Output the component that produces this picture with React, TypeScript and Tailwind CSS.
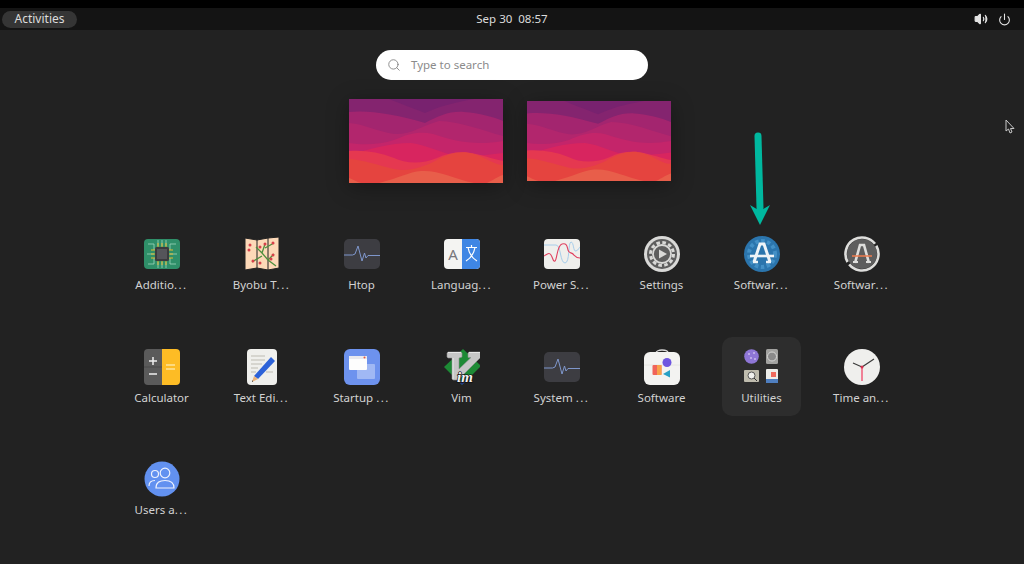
import { ReactNode } from 'react';
import { Search, Power, Volume2 } from 'lucide-react';

// Waves of the Ubuntu wallpaper, back to front
function Wallpaper({ className }: { className: string }) {
  return (
    <svg viewBox="0 0 154 84" preserveAspectRatio="none" className={className}>
      <rect width="154" height="84" fill="#78226f" />
      <path d="M0 0H40C50 4 60 8 76 14C95 5 115 2 125 0H154V30H0Z" fill="#84246f" />
      <path d="M0 13C20 11 45 15 76 24C90 17 100 12 115 13S145 18 154 22V84H0Z" fill="#a3256f" />
      <path d="M0 24C15 25 30 33 45 35C62 36 72 27 90 22C110 22 135 32 154 37V84H0Z" fill="#b2266d" />
      <path d="M0 44C14 46 30 46 45 41C60 34 72 32 84 35C105 42 125 47 154 42V84H0Z" fill="#c4256a" />
      <path d="M0 56C22 50 40 44 62 44C78 46 92 54 104 56S140 56 154 54V84H0Z" fill="#d8255f" />
      <path d="M0 52C15 51 30 53 45 59C55 64 72 66 88 59C100 53 115 52 127 55S145 60 154 62V84H0Z" fill="#e53850" />
      <path d="M0 60C15 61 28 66 45 70C60 73 75 68 88 61C100 54 112 51 125 55S145 66 154 66V84H0Z" fill="#e5443f" />
      <path d="M30 84C50 79 60 73 72 72C90 71 105 80 125 84Z" fill="#e85e4a" />
      <path d="M0 79C3 80 8 83 12 84H0ZM138 84C144 81 150 77 154 76V84Z" fill="#e85e4a" />
    </svg>
  );
}

function Pulse({ y = 0 }: { y?: number }) {
  return (
    <g transform={`translate(0 ${y})`}>
      <rect x="0" y="0" width="36" height="30" rx="5" fill="#3d3d42" />
      <path d="M0 16H8.500L11 15L14 7L18 22L20.500 14L22 19L24 16.500H36" fill="none" stroke="#7f97cc" strokeWidth="1" />
    </g>
  );
}

const icons: Record<string, ReactNode> = {
  chip: (
    <>
      <rect y="3" width="36" height="30" rx="4" fill="#2f8f69" />
      <path d="M4 8H10V14M32 8H26V14M4 28H10V22M32 28H26V22M3 18H10M26 18H33M14 4V10M18 4V10M22 4V10M14 26V32M18 26V32M22 26V32" stroke="#9fd5bd" strokeWidth=".8" fill="none" />
      <path d="M14 7V12M18 7V12M22 7V12M14 24V29M18 24V29M22 24V29M7 14H12M7 18H12M7 22H12M24 14H29M24 18H29M24 22H29" stroke="#e8b92f" strokeWidth="1" />
      <rect x="11" y="11" width="14" height="14" rx="1.500" fill="#3b3b3e" />
      <rect x="13" y="13" width="10" height="10" fill="#55555a" />
    </>
  ),
  byobu: (
    <>
      <path d="M1 2L13 4L24 2L35 1V32L24 34L13 32L1 34Z" fill="#fdd9b8" stroke="#222" strokeWidth="1" />
      <path d="M13 4V32M24 2V34" stroke="#1e1e1e" strokeWidth="1" />
      <path d="M32 30L24 24L18 17L12 11M18 17L21 8M24 24L30 18M18 20L8 26M21 12L30 7" stroke="#4e8f3e" strokeWidth="1.300" fill="none" />
      <g fill="#d8404a">
        <circle cx="6" cy="9" r="1.500" /><circle cx="5" cy="14" r="1.500" /><circle cx="9" cy="25" r="1.500" />
        <circle cx="21" cy="8" r="1.500" /><circle cx="29" cy="7" r="1.500" /><circle cx="16" cy="11" r="1.500" />
        <circle cx="29" cy="19" r="1.500" /><circle cx="27" cy="23" r="1.500" /><circle cx="16" cy="27" r="1.500" />
      </g>
    </>
  ),
  htop: <Pulse y={3} />,
  language: (
    <>
      <rect y="3" width="36" height="30" rx="4" fill="#f4f4f2" />
      <path d="M18 3H32A4 4 0 0 1 36 7V29A4 4 0 0 1 32 33H18Z" fill="#3f86e4" />
      <text x="9" y="24" textAnchor="middle" fontSize="15" fill="#77767b" fontFamily="Noto Sans, sans-serif">A</text>
      <path d="M22 11.500H33M27.500 9V11.500M24 11.500C25 17 28 22 33 25M31 11.500C30 17 27 22 22 25" stroke="#fff" strokeWidth="1.200" fill="none" />
    </>
  ),
  power: (
    <>
      <rect y="3" width="36" height="30" rx="4" fill="#efefec" />
      <path d="M0 9H12C17 9 16 27 21 27S24 6 27 6 29 16 32 15 35 11 36 11" fill="none" stroke="#a6cdea" strokeWidth="1" />
      <path d="M0 20C4 18 5 16 7 19S9 26 11 25 13 9 18 8 23 10 24 14 27 16 29 18 32 22 36 22" fill="none" stroke="#e0405f" strokeWidth="1.100" />
    </>
  ),
  settings: (
    <>
      <circle cx="18" cy="18" r="18" fill="#d9d9d7" />
      <circle cx="18" cy="18" r="15" fill="#5e5e5e" />
      <circle cx="18" cy="18" r="11.500" fill="none" stroke="#d9d9d7" strokeWidth="3" strokeDasharray="3.600 2.420" />
      <circle cx="18" cy="18" r="9" fill="none" stroke="#d9d9d7" strokeWidth="1.800" />
      <path d="M15 13.500L23 18L15 22.500Z" fill="#d9d9d7" />
    </>
  ),
  updater: (
    <>
      <circle cx="18" cy="18" r="18" fill="#2b75ad" />
      <circle cx="18" cy="18" r="13" fill="none" stroke="#4390c6" strokeWidth="4" strokeDasharray="3.500 2.500" />
      <path d="M10 26L16 8H20L26 26" fill="none" stroke="#eef3f7" strokeWidth="3" />
      <path d="M6 20H30" stroke="#eef3f7" strokeWidth="2.600" />
      <path d="M9 26H14M22 26H27" stroke="#eef3f7" strokeWidth="2.600" />
    </>
  ),
  updates: (
    <>
      <circle cx="18" cy="18" r="15" fill="#5d5d5d" />
      <circle cx="18" cy="18" r="16.500" fill="none" stroke="#dededc" strokeWidth="2.600" strokeDasharray="48.800 3" transform="rotate(-30 18 18)" />
      <path d="M11 27L16 9H20L25 27" fill="none" stroke="#dededc" strokeWidth="2.600" />
      <path d="M8 20H28" stroke="#ef7b4e" strokeWidth="1.500" />
      <path d="M9 26H14M22 26H27" stroke="#dededc" strokeWidth="2.200" />
    </>
  ),
  calculator: (
    <>
      <path d="M18 0H4A4 4 0 0 0 0 4V32A4 4 0 0 0 4 36H18Z" fill="#5a5a5a" />
      <path d="M18 0H32A4 4 0 0 1 36 4V32A4 4 0 0 1 32 36H18Z" fill="#fdbc25" />
      <path d="M0 18H18" stroke="#484848" strokeWidth="1" />
      <path d="M5 12H13M9 8V16M5 25H13" stroke="#efefef" strokeWidth="1.500" />
      <path d="M22 16H31M22 20H31" stroke="#fde49c" strokeWidth="1.500" />
    </>
  ),
  editor: (
    <>
      <rect x="3" width="30" height="36" rx="4" fill="#efefec" />
      <path d="M7 7H21M7 11H21M7 15H18M7 19H14M7 23H12M22 23H29" stroke="#bdbcb2" strokeWidth="1.200" />
      <path d="M10 27L27 8L31 12L14 30Z" fill="#2d62d8" />
      <path d="M10 27L14 30L8 33Z" fill="#eab27a" />
      <path d="M8 31L9 32.500L8 33Z" fill="#333" />
    </>
  ),
  startup: (
    <>
      <rect width="36" height="36" rx="6" fill="#6d92ee" />
      <rect x="13" y="15" width="18" height="15" rx="1" fill="#a0b8f4" />
      <rect x="5" y="7" width="18" height="14" rx="1" fill="#fdfdfd" />
      <rect x="5" y="7" width="18" height="3" fill="#e9e9ee" />
      <circle cx="20.500" cy="8.500" r="1" fill="#e5543f" />
    </>
  ),
  vim: (
    <>
      <path d="M19 0L37 17L18 36L0 18Z" fill="#1d8a35" />
      <path d="M8 27L18 36L25 30L18 33Z" fill="#25347d" />
      <path d="M3 4L4 3H17L18 4V8L15 9V20L27 8.500H24V4L25 3H36L37 4V8L14 31H9L8 30V9H4L3 8Z" fill="#c6c6c6" stroke="#8e8e8e" strokeWidth=".6" />
      <path d="M4 3.500H17M9 9V30M25 3.500H36" stroke="#f2f2f2" strokeWidth=".8" />
      <text x="13" y="33" fontSize="15" fontWeight="700" fontStyle="italic" fill="#f4f4f4" stroke="#111" strokeWidth="1.400" paintOrder="stroke" fontFamily="Liberation Serif, serif">im</text>
    </>
  ),
  monitor: <Pulse y={3} />,
  software: (
    <>
      <path d="M12 4C12 0 24 0 24 4" fill="none" stroke="#d8d8d8" strokeWidth="1.300" />
      <rect y="3" width="36" height="33" rx="6" fill="#f3f3f1" />
      <path d="M0 16H36" stroke="#e2e2e0" strokeWidth=".8" />
      <rect x="8.500" y="16" width="9" height="10" rx="1" fill="#f0645a" />
      <path d="M13 16H17.500V26H13Z" fill="#f8a24a" />
      <circle cx="23" cy="13.500" r="4.500" fill="#6e56e0" />
      <path d="M26 21V28.500L19 25Z" fill="#28a0c4" />
    </>
  ),
  utilities: (
    <>
      <circle cx="7.500" cy="7.500" r="7.300" fill="#8e76d6" />
      <g fill="#c8bbee"><circle cx="5" cy="5" r="1" /><circle cx="10" cy="4" r="1" /><circle cx="7" cy="9" r="1" /><circle cx="11" cy="10" r="1" /></g>
      <rect x="22" y="0" width="12" height="15" rx="1.500" fill="#a2a2a0" />
      <circle cx="28" cy="7.500" r="4.500" fill="#8a8a8a" stroke="#d8d8d6" strokeWidth="1" />
      <rect x="0" y="21" width="15" height="12" rx="1" fill="#bfbcae" />
      <circle cx="7.500" cy="26.500" r="3.500" fill="#f1f1ee" stroke="#555" strokeWidth="1" />
      <path d="M10 29L13 32" stroke="#333" strokeWidth="1" />
      <rect x="22" y="20" width="12" height="14" rx="1" fill="#ededea" />
      <rect x="27" y="23" width="5" height="5" fill="#ef6a5e" />
      <path d="M22 30H34V34H22Z" fill="#4f7fc0" />
    </>
  ),
  clock: (
    <>
      <circle cx="18" cy="18" r="18" fill="#efefed" />
      <path d="M18 18L9 14M18 18L30 10" stroke="#3b3b3b" strokeWidth="1.200" />
      <path d="M18 17V32" stroke="#f05d78" strokeWidth="1.500" />
      <circle cx="18" cy="18" r="1.500" fill="#d6314f" />
    </>
  ),
  users: (
    <>
      <circle cx="18" cy="18" r="17.500" fill="#6291f0" />
      <g fill="none" stroke="#eef2fd" strokeWidth="1.200">
        <circle cx="21" cy="12" r="4.800" />
        <path d="M12 27C12 21 16 19.500 21 19.500S30 21 30 27H12Z" />
        <circle cx="11" cy="13" r="3.500" />
        <path d="M5 25C5 21 7 19.500 11 19.500" />
      </g>
    </>
  ),
};

const apps = [
  { icon: 'chip', label: 'Additio', cut: true },
  { icon: 'byobu', label: 'Byobu T', cut: true },
  { icon: 'htop', label: 'Htop' },
  { icon: 'language', label: 'Languag', cut: true },
  { icon: 'power', label: 'Power S', cut: true },
  { icon: 'settings', label: 'Settings' },
  { icon: 'updater', label: 'Softwar', cut: true },
  { icon: 'updates', label: 'Softwar', cut: true },
  { icon: 'calculator', label: 'Calculator' },
  { icon: 'editor', label: 'Text Edi', cut: true },
  { icon: 'startup', label: 'Startup ', cut: true },
  { icon: 'vim', label: 'Vim' },
  { icon: 'monitor', label: 'System ', cut: true },
  { icon: 'software', label: 'Software' },
  { icon: 'utilities', label: 'Utilities', active: true },
  { icon: 'clock', label: 'Time an', cut: true },
  { icon: 'users', label: 'Users a', cut: true },
];

export default function App() {
  return (
    <div className="relative h-[564px] w-[1024px] overflow-hidden bg-[#222222] font-['Noto_Sans',sans-serif]">
      <div className="h-2 bg-black" />

      {/* Top panel */}
      <div className="grid h-[22px] grid-cols-3 items-center bg-[#141414] px-[2px] text-[#dcdcdc]">
        <div className="flex h-[17px] w-[75px] items-center justify-center rounded-full bg-[#353535] text-[12px]">Activities</div>
        <div className="text-center text-[11.500px]">Sep 30&nbsp;&nbsp;08:57</div>
        <div className="flex items-center justify-end gap-[10px] pr-[11px]">
          <Volume2 size={14} className="fill-[#e4e4e4] text-[#e4e4e4]" />
          <Power size={13} className="text-[#e4e4e4]" />
        </div>
      </div>

      {/* Search */}
      <div className="mt-5 flex justify-center">
        <div className="flex h-[30px] w-[272px] items-center gap-[10px] rounded-full bg-white pl-[11px] text-[11.500px] leading-[32px] text-[#8b8b8b]">
          <Search size={14} strokeWidth={1.500} className="text-[#808080]" />
          Type to search
        </div>
      </div>

      {/* Workspaces */}
      <div className="mt-[19px] flex h-[84px] items-center justify-center gap-6 pr-[5px]">
        <Wallpaper className="h-[84px] w-[154px] shadow-[0_4px_20px_rgba(0,0,0,0.35)]" />
        <Wallpaper className="h-[80px] w-[144px] shadow-[0_4px_20px_rgba(0,0,0,0.35)]" />
      </div>

      {/* App grid */}
      <div className="mt-[41px] ml-[111px] grid w-[800px] auto-rows-[112.500px] grid-cols-8">
        {apps.map((app) => (
          <div key={app.icon} className="flex justify-center">
            <div className={`ml-px flex h-[79px] w-[79px] flex-col items-center rounded-[10px] pt-[12px] ${app.active ? 'bg-[#2d2d2d]' : ''}`}>
              <svg viewBox="0 0 36 36" className="h-9 w-9 shrink-0">{icons[app.icon]}</svg>
              <div className="mt-[4px] text-[11.500px] leading-[18px] whitespace-pre text-[#d2d2d2]">
                {app.label}
                {app.cut && <span className="tracking-[1.500px]">...</span>}
              </div>
            </div>
          </div>
        ))}
      </div>

      {/* Arrow drawn over the screenshot */}
      <svg className="absolute top-[130px] left-[745px] h-[100px] w-[30px]" viewBox="0 0 30 100">
        <path d="M13 6L15 78" stroke="#00b89f" strokeWidth="7" strokeLinecap="round" fill="none" />
        <path d="M5 75L15 81L25 75L15 95Z" fill="#00b89f" />
      </svg>

      {/* Mouse pointer */}
      <svg className="absolute top-[119px] left-[1005px] h-[15px] w-[11px]" viewBox="0 0 11 15">
        <path d="M1 1V12L3.500 10L5 14L7 13L5.500 9.500H9Z" fill="#222" stroke="#c8c8c8" strokeWidth="1" />
      </svg>
    </div>
  );
}
